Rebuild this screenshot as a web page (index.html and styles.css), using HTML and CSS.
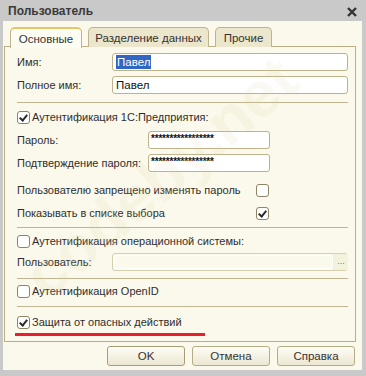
FILE: index.html
```html
<!DOCTYPE html>
<html lang="ru">
<head>
    <meta charset="UTF-8">
    <title>Пользователь</title>
    <link rel="stylesheet" href="styles.css">
</head>
<body>
    <div class="window">
        <div class="titlebar">
            <span class="title">Пользователь</span>
            <svg class="close" width="10" height="10" viewBox="0 0 10 10">
                <path d="M1 1 L9 9 M9 1 L1 9" stroke="#333" stroke-width="2.4" />
            </svg>
        </div>
        <div class="frame">
            <div class="tabs">
                <div class="tab active">Основные</div>
                <div class="tab">Разделение данных</div>
                <div class="tab">Прочие</div>
            </div>
            <div class="panel">
                <div class="field row-name">
                    <span class="label">Имя:</span>
                    <div class="input"><span class="selected">Павел</span></div>
                </div>
                <div class="field row-fullname">
                    <span class="label">Полное имя:</span>
                    <div class="input">Павел</div>
                </div>

                <div class="sep sep-1"></div>

                <div class="check-row row-auth">
                    <span class="box checked"></span>
                    <span>Аутентификация 1С:Предприятия:</span>
                </div>
                <div class="field pwd row-pwd">
                    <span class="label">Пароль:</span>
                    <div class="input short"><span class="stars">*****************</span></div>
                </div>
                <div class="field pwd row-confirm">
                    <span class="label">Подтверждение пароля:</span>
                    <div class="input short"><span class="stars">*****************</span></div>
                </div>
                <div class="option row-forbid">
                    <span class="label-wide">Пользователю запрещено изменять пароль</span>
                    <span class="box"></span>
                </div>
                <div class="option row-show">
                    <span class="label-wide">Показывать в списке выбора</span>
                    <span class="box checked"></span>
                </div>

                <div class="sep sep-2"></div>

                <div class="check-row row-os">
                    <span class="box"></span>
                    <span>Аутентификация операционной системы:</span>
                </div>
                <div class="field row-osuser">
                    <span class="label">Пользователь:</span>
                    <div class="input disabled">
                        <div class="inner"></div>
                        <div class="dots">...</div>
                    </div>
                </div>

                <div class="sep sep-3"></div>

                <div class="check-row row-openid">
                    <span class="box"></span>
                    <span>Аутентификация OpenID</span>
                </div>

                <div class="sep sep-4"></div>

                <div class="check-row row-protect">
                    <span class="box checked"></span>
                    <span>Защита от опасных действий</span>
                </div>
                <div class="redline"></div>
            </div>
            <div class="buttons">
                <button class="btn default">OK</button>
                <button class="btn">Отмена</button>
                <button class="btn">Справка</button>
            </div>
            <div class="watermark">codeby.net</div>
        </div>
    </div>
</body>
</html>
```

FILE: styles.css
```css
* {
    margin: 0;
    padding: 0;
    box-sizing: border-box;
}

body {
    background-color: #c9c9c9;
    font-family: "Liberation Sans", Arial, sans-serif;
    font-size: 11px;
    color: #2e2e2e;
}

.window {
    width: 366px;
    height: 376px;
    display: flex;
    flex-direction: column;
    background-color: #c9c9c9;
    overflow: hidden;
}

.titlebar {
    height: 21px;
    padding: 0 9px 0 8px;
    display: flex;
    justify-content: space-between;
    align-items: center;
}

.title {
    font-weight: bold;
    font-size: 12px;
    color: #3a3a3a;
}

.close {
    margin-top: 2px;
}

.frame {
    flex: 1;
    margin: 0 4px 6px 3px;
    background-color: #fbf9eb;
    display: flex;
    flex-direction: column;
    position: relative;
}

.tabs {
    display: flex;
    gap: 6px;
    padding: 6px 0 0 7px;
    height: 26px;
    position: relative;
    z-index: 1;
}

.tab {
    height: 20px;
    border: 1px solid #bdb38e;
    border-bottom: none;
    border-radius: 5px 5px 0 0;
    background-color: #ece6cd;
    display: flex;
    align-items: center;
    justify-content: center;
    white-space: nowrap;
    font-size: 11.5px;
    color: #333;
}

.tab.active {
    background-color: #fdfcf3;
    border-top: 2px solid #e8c46a;
    height: 21px;
    width: 72px;
}

.tab:nth-child(2) {
    width: 121px;
}

.tab:nth-child(3) {
    width: 57px;
}

.panel {
    height: 296px;
    margin: -1px 6px 0 1px;
    border: 1px solid #b9ae85;
    padding: 6px 7px 0 12px;
    display: flex;
    flex-direction: column;
}

.field {
    display: flex;
    align-items: center;
    height: 18px;
}

.label {
    width: 95px;
    flex-shrink: 0;
}

.pwd .label {
    width: 131px;
}

.input {
    flex: 1;
    height: 18px;
    border: 1px solid #bdb28a;
    border-radius: 3px;
    background-color: #fff;
    padding-left: 3px;
    display: flex;
    align-items: center;
    font-size: 11.5px;
    color: #111;
}

.input.short {
    flex: none;
    width: 122px;
    padding-left: 2px;
    align-items: flex-start;
    padding-top: 1px;
}

.selected {
    background-color: #3167c4;
    color: #fff;
    padding: 0 1px;
    line-height: 14px;
}

.stars {
    font-size: 10px;
    font-weight: bold;
    letter-spacing: -0.2px;
    line-height: 12px;
}

.input.disabled {
    background-color: #fbf9eb;
    border-color: #d6cfb0;
    padding: 1px 0 1px 1px;
    align-items: stretch;
}

.inner {
    flex: 1;
    border: 1px solid #fff;
    border-radius: 2px;
}

.dots {
    width: 15px;
    background-color: #f3f2dc;
    border-left: 1px solid #eef3cc;
    color: #777;
    font-size: 9px;
    text-align: center;
    line-height: 14px;
    margin: -1px -1px -1px 0;
}

.sep {
    height: 1px;
    background-color: #bfb592;
}

.check-row {
    height: 20px;
    display: flex;
    align-items: center;
    gap: 2px;
}

.option {
    height: 20px;
    display: flex;
    align-items: center;
}

.label-wide {
    width: 239px;
}

.box {
    width: 13px;
    height: 13px;
    border: 1px solid #8d8466;
    border-radius: 3px;
    background-color: #fff;
    position: relative;
    flex-shrink: 0;
}

.box.checked::after {
    content: "";
    position: absolute;
    left: 3px;
    top: 1px;
    width: 3px;
    height: 6px;
    border: solid #2a2a2a;
    border-width: 0 2px 2px 0;
    transform: rotate(40deg);
}

.row-fullname { margin-top: 5px; }
.sep-1 { margin-top: 8px; }
.row-auth { margin-top: 4px; }
.row-pwd { margin-top: 4px; }
.row-confirm { margin-top: 5px; }
.row-forbid { margin-top: 8px; }
.row-show { margin-top: 3px; }
.sep-2 { margin-top: 4px; }
.row-os { margin-top: 3px; }
.row-osuser { margin-top: 2px; }
.sep-3 { margin-top: 7px; }
.row-openid { margin-top: 2px; }
.sep-4 { margin-top: 5px; }
.row-protect { margin-top: 5px; }

.redline {
    width: 190px;
    height: 3px;
    margin: 1px 0 0 -2px;
    background-color: #e8202c;
}

.buttons {
    display: flex;
    justify-content: flex-end;
    gap: 7px;
    padding: 4px 7px 0 0;
}

.btn {
    width: 78px;
    height: 20px;
    border: 1px solid #b6ac86;
    border-radius: 3px;
    background: linear-gradient(#fefdf6, #ece7d2);
    font-family: "Liberation Sans", Arial, sans-serif;
    font-size: 11.5px;
    color: #333;
}

.btn.default {
    border-color: #a79c74;
}

.watermark {
    position: absolute;
    left: 6px;
    top: 235px;
    font-size: 64px;
    font-weight: bold;
    color: rgba(215, 205, 160, 0.12);
    transform: rotate(-40deg);
    transform-origin: left top;
    pointer-events: none;
    white-space: nowrap;
}
```
